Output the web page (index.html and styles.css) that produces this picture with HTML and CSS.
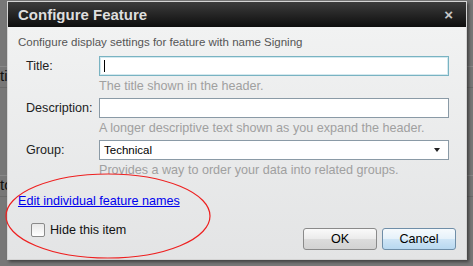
FILE: index.html
```html
<!DOCTYPE html>
<html lang="en">
<head>
    <meta charset="UTF-8">
    <title>Configure Feature</title>
    <link rel="stylesheet" href="styles.css">
</head>
<body>
    <div class="page-behind">
        <div class="behind-row">ti</div>
        <div class="behind-row low">to</div>
    </div>

    <div class="dialog">
        <div class="dialog-title">
            <span>Configure Feature</span>
            <span class="close">&times;</span>
        </div>
        <div class="dialog-body">
            <p class="intro">Configure display settings for feature with name Signing</p>

            <div class="form">
                <label class="field-label">Title:</label>
                <div class="field">
                    <div class="text-input focused"><span class="caret"></span></div>
                    <div class="hint">The title shown in the header.</div>
                </div>

                <label class="field-label">Description:</label>
                <div class="field">
                    <div class="text-input"></div>
                    <div class="hint">A longer descriptive text shown as you expand the header.</div>
                </div>

                <label class="field-label">Group:</label>
                <div class="field">
                    <div class="select">
                        <span>Technical</span>
                        <span class="arrow"></span>
                    </div>
                    <div class="hint">Provides a way to order your data into related groups.</div>
                </div>
            </div>

            <div class="footer">
                <div class="footer-left">
                    <a href="#" class="edit-link">Edit individual feature names</a>
                    <label class="check">
                        <span class="checkbox"></span>
                        Hide this item
                    </label>
                </div>
                <div class="buttons">
                    <button class="btn">OK</button>
                    <button class="btn hover">Cancel</button>
                </div>
            </div>
        </div>
    </div>

    <!-- annotation drawn over the dialog -->
    <svg class="annotation" width="473" height="266" viewBox="0 0 473 266">
        <ellipse cx="108" cy="216" rx="102" ry="42" fill="none" stroke="#ee2020" stroke-width="1.2"/>
    </svg>
</body>
</html>
```

FILE: styles.css
```css
body {
    margin: 0;
    width: 473px;
    height: 266px;
    overflow: hidden;
    position: relative;
    background: #777;
    font-family: "Liberation Sans", Arial, sans-serif;
}
.page-behind {
    padding-top: 66px;
}
.behind-row {
    font-size: 15px;
    color: #111;
    height: 20px;
    border-top: 1px solid #888;
    border-bottom: 1px solid #6a6a6a;
}
.behind-row.low {
    margin-top: 87px;
}
.dialog {
    position: absolute;
    left: 7px;
    top: 1px;
    width: 458px;
    height: 257px;
    border: 1px solid #d4d4d4;
    box-shadow: 2px 2px 3px rgba(0,0,0,0.45);
    display: flex;
    flex-direction: column;
}
.dialog-title {
    height: 25px;
    background: linear-gradient(#3c3c3c, #0e0e0e);
    color: #dedede;
    font-weight: bold;
    font-size: 15px;
    display: flex;
    align-items: center;
    justify-content: space-between;
    padding: 0 13px 0 10px;
}
.close {
    font-size: 15px;
    color: #c8c8c8;
}
.dialog-body {
    flex: 1;
    background: linear-gradient(#f1f2f2, #e3e4e5);
    padding: 0 10px;
    display: flex;
    flex-direction: column;
}
.intro {
    margin: 9px 0 0;
    font-size: 11.5px;
    color: #555;
}
.form {
    display: grid;
    grid-template-columns: 73px 350px;
    margin: 8px 0 0 8px;
    font-size: 12.6px;
}
.field-label {
    color: #222;
    padding-top: 3px;
}
.field {
    height: 42px;
}
.text-input {
    box-sizing: border-box;
    width: 350px;
    height: 20px;
    border: 1px solid #8a9aa6;
    background: #fff;
    padding: 3px 4px;
}
.text-input.focused {
    border-color: #79b3c2;
    box-shadow: inset 0 0 0 1px #d4e9ef;
}
.caret {
    display: block;
    width: 1px;
    height: 12px;
    background: #000;
}
.select {
    box-sizing: border-box;
    height: 20px;
    border: 1px solid #8a9aa6;
    background: #fff;
    display: flex;
    align-items: center;
    justify-content: space-between;
    padding: 0 8px 0 4px;
    font-size: 11.5px;
    color: #000;
}
.arrow {
    width: 0;
    height: 0;
    border-left: 3px solid transparent;
    border-right: 3px solid transparent;
    border-top: 4px solid #222;
}
.hint {
    color: #a0a0a0;
    padding-top: 3px;
}
.footer {
    flex: 1;
    display: flex;
    justify-content: space-between;
    font-size: 12.6px;
}
.footer-left {
    display: flex;
    flex-direction: column;
    padding-top: 12px;
}
.edit-link {
    color: #0000ee;
}
.check {
    display: flex;
    align-items: center;
    gap: 5px;
    margin: 15px 0 0 13px;
    color: #111;
}
.checkbox {
    width: 12px;
    height: 12px;
    border: 1px solid #8a8a8a;
    border-radius: 2px;
    background: linear-gradient(#e8e8e8, #fff);
}
.buttons {
    display: flex;
    gap: 5px;
    align-items: flex-end;
    padding-bottom: 9px;
}
.btn {
    width: 74px;
    height: 22px;
    border: 1px solid #8a8a8a;
    border-radius: 3px;
    background: linear-gradient(#fafafa 0%, #ebebeb 50%, #dcdcdc 51%, #d2d2d2 100%);
    font: 12.6px "Liberation Sans", Arial, sans-serif;
    color: #000;
    padding: 0;
}
.btn.hover {
    border-color: #6f8ea8;
    background: linear-gradient(#f6fafd 0%, #e5f1fa 50%, #cfe5f6 51%, #b8d8f0 100%);
}
.annotation {
    position: absolute;
    left: 0;
    top: 0;
    pointer-events: none;
}
```
